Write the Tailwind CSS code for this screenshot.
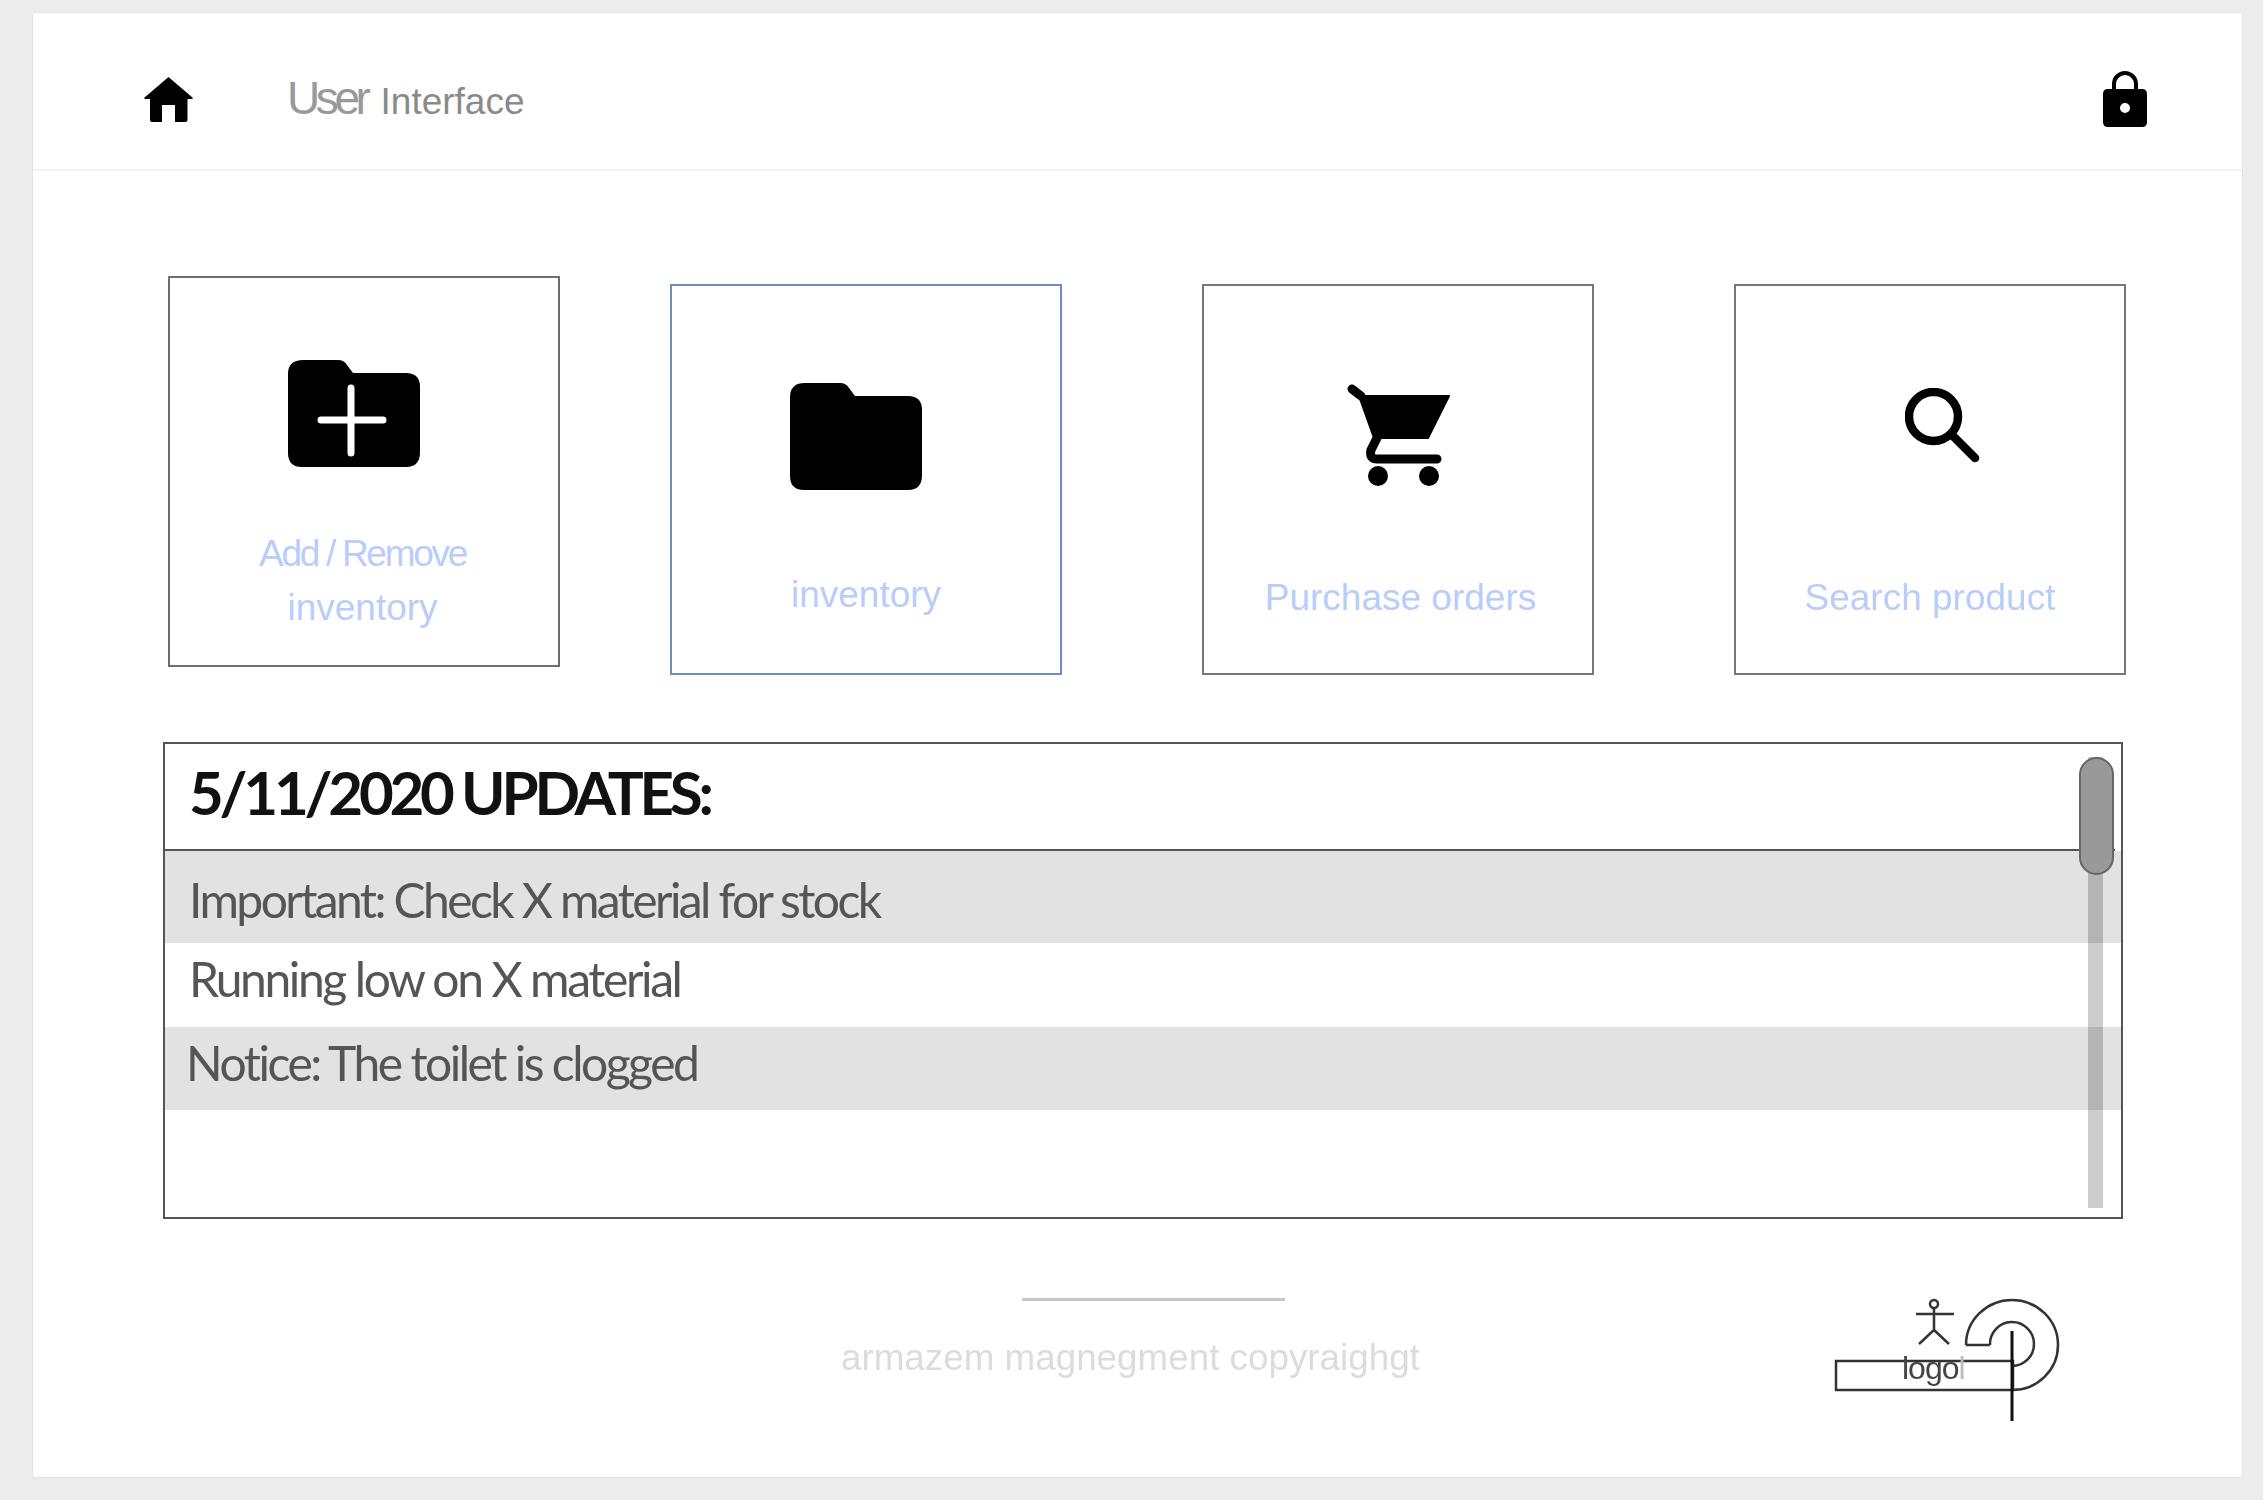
<!DOCTYPE html>
<html lang="en">
<head>
    <meta charset="UTF-8">
    <meta name="viewport" content="width=device-width, initial-scale=1.0">
    <script src="https://cdn.jsdelivr.net/npm/@tailwindcss/browser@4"></script>
    <title>User Interface</title>
</head>
<body class="bg-[#ececec] font-['Liberation_Sans',sans-serif]">

    <main class="ml-[32px] pt-[12px] w-[2211px] blur-[0.7px]">
        <div class="h-[1466px] bg-white border border-[#e2e2e2] rounded-[3px]">

            <!-- Header -->
            <header class="h-[158px] border-b-2 border-[#f2f2f2] flex items-center">
                <svg class="ml-[111px] mt-[17px] w-[49px] h-[45px]" viewBox="0 0 49 45" fill="#000">
                    <path d="M24.5 0 L49 21 Q49 22 47 22 L43.5 22 L43.5 43 Q43.5 45 41.5 45 L31 45 L31 28 L18 28 L18 45 L8 45 Q6 45 6 43 L6 22 L2 22 Q0 22 0 21Z"/>
                </svg>
                <div class="ml-[94px] mt-[14px] flex items-baseline text-[#8a8a8a]">
                    <span class="text-[46px] tracking-[-4.4px] text-[#999]">User</span>
                    <span class="ml-[14px] text-[37px]">Interface</span>
                </div>
                <svg class="ml-auto mr-[95px] mt-[16px] w-[44px] h-[56px]" viewBox="0 0 44 56" fill="#000">
                    <path d="M11 18 V13 A11 11 0 0 1 33 13 V18" fill="none" stroke="#000" stroke-width="4"/>
                    <path fill-rule="evenodd" d="M5 18 H39 Q44 18 44 23 V51 Q44 56 39 56 H5 Q0 56 0 51 V23 Q0 18 5 18Z M22 32 A5 5 0 1 0 22 42 A5 5 0 1 0 22 32Z"/>
                </svg>
            </header>

            <!-- Tiles -->
            <section class="mt-[105px] pl-[135px] flex items-start">
                <a class="w-[392px] h-[391px] border-2 border-[#6e6e6e] flex flex-col">
                    <svg class="ml-[118px] mt-[82px] w-[132px] h-[107px] shrink-0" viewBox="0 0 132 107">
                        <path d="M15 0 H50 Q56 0 59 5 L65 13 H118 Q132 13 132 27 V92 Q132 107 118 107 H14 Q0 107 0 93 V14 Q0 0 15 0Z" fill="#000"/>
                        <path d="M33 60 H95 M63 28 V93" stroke="#fff" stroke-width="7" stroke-linecap="round"/>
                    </svg>
                    <p class="mt-[60px] text-center text-[37px] leading-[54px] text-[#b9cdfb] pr-[3px]">
                        <span class="tracking-[-2.3px]">Add / Remove</span><br>inventory
                    </p>
                </a>

                <a class="ml-[110px] mt-[8px] w-[392px] h-[391px] border-2 border-[#6c8ebf] flex flex-col">
                    <svg class="ml-[118px] mt-[97px] w-[132px] h-[107px] shrink-0" viewBox="0 0 132 107">
                        <path d="M15 0 H50 Q56 0 59 5 L65 13 H118 Q132 13 132 27 V92 Q132 107 118 107 H14 Q0 107 0 93 V14 Q0 0 15 0Z" fill="#000"/>
                    </svg>
                    <p class="mt-[78px] text-center text-[37px] leading-[54px] text-[#b9cdfb]">inventory</p>
                </a>

                <a class="ml-[140px] mt-[8px] w-[392px] h-[391px] border-2 border-[#777] flex flex-col">
                    <svg class="ml-[143px] mt-[98px] w-[103px] h-[103px] shrink-0" viewBox="0 0 103 103" fill="#000">
                        <path d="M12 12 H102 L81 54 H27Z" stroke="#000" stroke-width="2" stroke-linejoin="round"/>
                        <path d="M5 5 L14 12 M30 54 L24 66 Q22 75 30 75 H90" fill="none" stroke="#000" stroke-width="9" stroke-linecap="round"/>
                        <circle cx="31" cy="92" r="10"/>
                        <circle cx="82" cy="92" r="10"/>
                    </svg>
                    <p class="mt-[84px] text-center text-[37px] leading-[54px] text-[#b9cdfb] pl-[5px]">Purchase orders</p>
                </a>

                <a class="ml-[140px] mt-[8px] w-[392px] h-[391px] border-2 border-[#777] flex flex-col">
                    <svg class="ml-[169px] mt-[102px] w-[75px] h-[75px] shrink-0" viewBox="0 0 75 75" fill="none" stroke="#000" stroke-width="8.5" stroke-linecap="round">
                        <circle cx="28.5" cy="28.5" r="24.5"/>
                        <path d="M47 47 L70 70"/>
                    </svg>
                    <p class="mt-[108px] text-center text-[37px] leading-[54px] text-[#b9cdfb]">Search product</p>
                </a>
            </section>

            <!-- Updates list -->
            <section class="relative mt-[67px] ml-[130px] w-[1960px] h-[477px] border-2 border-[#555] font-['Lato',sans-serif]">
                <div class="h-[107px] border-b-2 border-[#555] mr-[6px] pl-[24px] pb-[10px] flex items-center">
                    <h2 class="font-bold text-[60px] tracking-[-4.2px] text-[#111]">5/11/2020 UPDATES:</h2>
                </div>
                <ul class="text-[48px] text-[#555]">
                    <li class="h-[92px] bg-[#e2e2e2] pl-[24px] pt-[13px] tracking-[-2.6px]">Important: Check X material for stock</li>
                    <li class="h-[84px] pl-[24px] tracking-[-2.4px]">Running low on X material</li>
                    <li class="h-[83px] bg-[#e2e2e2] pl-[21px] tracking-[-2.5px]">Notice: The toilet is clogged</li>
                </ul>
                <div class="absolute left-[1923px] top-[13px] w-[15px] h-[451px] bg-black/20"></div>
                <div class="absolute left-[1914px] top-[13px] w-[35px] h-[118px] rounded-full bg-[#999] border-2 border-[#666]"></div>
            </section>

            <!-- Footer -->
            <footer class="flex items-start">
                <div class="w-[1797px]">
                    <div class="mt-[79px] ml-[989px] w-[263px] h-[3px] bg-[#c6c6c6]"></div>
                    <p class="mt-[29px] ml-[808px] text-[36.8px] text-[#dcdcdc] whitespace-nowrap">armazem magnegment copyraighgt</p>
                </div>
                <svg class="mt-[75px] w-[235px] h-[130px]" viewBox="0 0 235 130" fill="none" stroke="#333" stroke-width="2.5">
                    <circle cx="104" cy="10" r="4"/>
                    <path d="M86 20 H124 M104 14 V36 L89 50 M104 36 L119 50" />
                    <rect x="6" y="67" width="177" height="29"/>
                    <path d="M136 51 A46 45 0 1 1 182 96 M160 51 A22 22 0 1 1 182 72 M136 51 H160"/>
                    <path d="M182 37 V127" stroke="#111" stroke-width="3"/>
                    <text x="72" y="85" font-family="Liberation Sans" font-size="32" letter-spacing="-1" fill="#444" stroke="none">logo<tspan fill="#bbb">l</tspan></text>
                </svg>
            </footer>
        </div>
    </main>

</body>
</html>
